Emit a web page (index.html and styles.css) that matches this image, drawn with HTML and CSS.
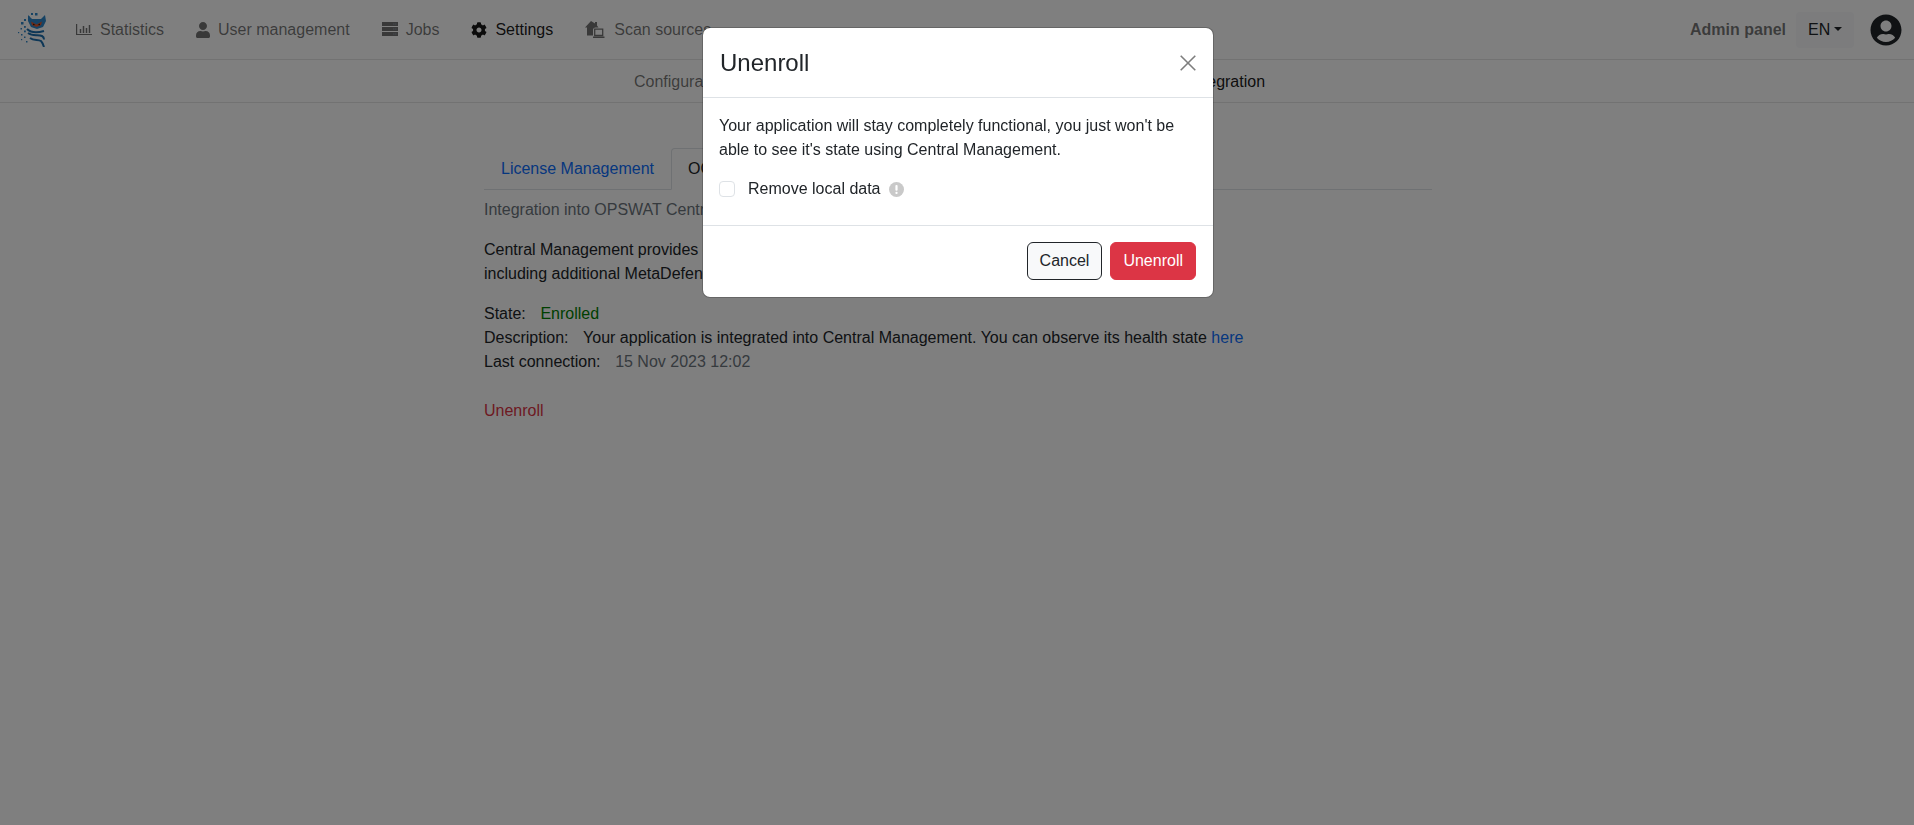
FILE: index.html
```html
<!DOCTYPE html>
<html lang="en">
<head>
<meta charset="utf-8">
<title>Settings</title>
<link rel="stylesheet" href="styles.css">
</head>
<body>
<header class="navbar">
  <a class="brand" href="#" aria-label="Logo">
    <svg width="28" height="34" viewBox="0 0 28 34">
      <g fill="#2f86c8">
        <rect x="13" y="0" width="2" height="2"/><rect x="17" y="0" width="2.500" height="2.500"/><rect x="10" y="3" width="1.500" height="1.500"/>
        <rect x="3" y="9" width="2.500" height="2.500"/><rect x="6" y="6" width="2" height="2"/><rect x="6" y="13" width="1.800" height="1.800"/><rect x="2.500" y="15" width="1.500" height="1.500"/>
        <rect x="6" y="17.500" width="1.800" height="1.800"/><rect x="0" y="19" width="1.200" height="1.200"/><rect x="3" y="21" width="1.500" height="1.500"/><rect x="6" y="23.500" width="1.500" height="1.500"/><rect x="3" y="26" width="1.200" height="1.200"/><rect x="8" y="28" width="1.500" height="1.500"/>
        <path d="M10 2l4 4h9l4-4 1 6-3 6-6 2-6-2-3-6z"/>
      </g>
      <path d="M13 8.500l5.500 3 5.500-3-1 3.500-4.500 2-4.500-2z" fill="#e2572b"/>
      <path d="M15 10.500l2.500 1.500-2.500.3zM22 10.500l-2.500 1.500 2.500.3z" fill="#3a2010"/>
      <g fill="none" stroke="#1d6fae" stroke-width="2">
        <path d="M9 16c4 4 10 4 17 2"/>
        <path d="M10 20c5 4 10 1 14 3 1.500.8 2 2 2 3.500"/>
        <path d="M12 25c4 3 8 1 11 3 1 1 2 3 3 6"/>
      </g>
    </svg>
  </a>
  <nav class="nav-main">
    <a class="nav-link" href="#">
      <svg class="ico" width="16" height="16" viewBox="0 0 16 16"><path d="M.6 2v10.500h15.400" fill="none" stroke="currentColor" stroke-width="1.200"/><path d="M4.500 11V7M7.500 11V4M10.500 11V6M13.500 11V3" stroke="currentColor" stroke-width="1.500"/></svg>
      Statistics
    </a>
    <a class="nav-link" href="#">
      <svg class="ico" width="14" height="16" viewBox="0 0 448 512"><path fill="currentColor" d="M224 256c70.700 0 128-57.300 128-128S294.700 0 224 0 96 57.300 96 128s57.300 128 128 128zm89.600 32h-16.700c-22.200 10.200-46.900 16-72.900 16s-50.600-5.800-72.900-16h-16.700C60.200 288 0 348.200 0 422.400V464c0 26.500 21.500 48 48 48h352c26.500 0 48-21.500 48-48v-41.600c0-74.200-60.200-134.400-134.400-134.400z"/></svg>
      User management
    </a>
    <a class="nav-link" href="#">
      <svg class="ico" width="16" height="16" viewBox="0 0 16 16"><path fill="currentColor" d="M0 0h16v4H0zM0 5h16v4H0zM0 10h16v4H0z"/><path fill="#8a94a0" d="M11 1.500h1.500v1H11zM13 1.500h1.500v1H13zM11 6.500h1.500v1H11zM13 6.500h1.500v1H13zM11 11.500h1.500v1H11zM13 11.500h1.500v1H13z"/></svg>
      Jobs
    </a>
    <a class="nav-link is-active" href="#">
      <svg class="ico" width="16" height="16" viewBox="0 0 512 512"><path fill="currentColor" d="M487.400 315.700l-42.600-24.600c4.300-23.200 4.300-47 0-70.200l42.600-24.600c4.900-2.800 7.100-8.600 5.500-14-11.100-35.600-30-67.800-54.700-94.600-3.800-4.100-10-5.100-14.800-2.300L380.800 110c-17.900-15.400-38.500-27.300-60.800-35.100V25.800c0-5.600-3.900-10.500-9.400-11.700-36.700-8.200-74.300-7.800-109.200 0-5.500 1.200-9.400 6.100-9.400 11.700V75c-22.200 7.900-42.800 19.800-60.800 35.100L88.700 85.500c-4.900-2.800-11-1.900-14.800 2.300-24.700 26.700-43.600 58.900-54.700 94.600-1.700 5.400.6 11.200 5.500 14L67.300 221c-4.300 23.200-4.300 47 0 70.200l-42.600 24.600c-4.900 2.800-7.100 8.600-5.500 14 11.100 35.600 30 67.800 54.700 94.600 3.800 4.100 10 5.100 14.800 2.300l42.600-24.600c17.900 15.400 38.500 27.300 60.800 35.100v49.200c0 5.600 3.900 10.500 9.400 11.700 36.700 8.200 74.300 7.800 109.200 0 5.500-1.200 9.400-6.100 9.400-11.700v-49.200c22.200-7.900 42.800-19.800 60.800-35.100l42.600 24.600c4.900 2.800 11 1.900 14.800-2.300 24.700-26.700 43.600-58.900 54.700-94.600 1.500-5.500-.7-11.300-5.600-14.100zM256 336c-44.100 0-80-35.900-80-80s35.900-80 80-80 80 35.900 80 80-35.900 80-80 80z"/></svg>
      Settings
    </a>
    <a class="nav-link" href="#">
      <svg class="ico" width="21" height="18" viewBox="0 0 21 18"><path fill="currentColor" d="M6 0L0 6.500h2v8h6V9c0-1.500 1-2.500 2.500-2.500h3L12 4.500V1h-2v1.500z"/><path fill="none" stroke="currentColor" stroke-width="1.300" d="M9.700 8.200h8v6.300h-8z"/><path fill="currentColor" d="M8 15.500h11.500V17H8z"/></svg>
      Scan sources
    </a>
  </nav>
  <div class="nav-right">
    <a class="admin" href="#">Admin panel</a>
    <button class="lang" type="button">EN<span class="caret"></span></button>
    <svg class="avatar" width="32" height="32" viewBox="0 0 496 512"><path fill="#212529" d="M248 8C111 8 0 119 0 256s111 248 248 248 248-111 248-248S385 8 248 8zm0 96c48.600 0 88 39.400 88 88s-39.400 88-88 88-88-39.400-88-88 39.400-88 88-88zm0 344c-58.700 0-111.300-26.600-146.500-68.200 18.800-35.400 55.600-59.800 98.500-59.800 2.400 0 4.800.4 7.100 1.100 13 4.200 26.600 6.900 40.900 6.900 14.300 0 28-2.700 40.900-6.900 2.300-.7 4.700-1.100 7.100-1.100 42.900 0 79.700 24.400 98.500 59.800C359.300 421.400 306.700 448 248 448z"/></svg>
  </div>
</header>

<nav class="subnav">
  <a href="#">Configuration</a>
  <a href="#">Security</a>
  <a href="#">Licensing</a>
  <a href="#">Logging</a>
  <a class="is-active" href="#">Integration</a>
</nav>

<main class="content">
  <ul class="tabs">
    <li><a class="tab" href="#">License Management</a></li>
    <li><a class="tab is-active" href="#">OCM Integration</a></li>
  </ul>
  <p class="muted">Integration into OPSWAT Central Management</p>
  <p class="intro">Central Management provides centralized administration of all of your products,<br>including additional MetaDefender services.</p>
  <dl class="facts">
    <div><dt>State:</dt><dd class="ok">Enrolled</dd></div>
    <div><dt>Description:</dt><dd>Your application is integrated into Central Management. You can observe its health state <a href="#">here</a></dd></div>
    <div><dt>Last connection:</dt><dd class="date">15 Nov 2023 12:02</dd></div>
  </dl>
  <a class="danger-link" href="#">Unenroll</a>
</main>

<div class="backdrop"></div>
<div class="modal-wrap">
  <section class="modal" role="dialog" aria-modal="true">
    <div class="modal-head">
      <h5>Unenroll</h5>
      <svg class="close" width="16" height="16" viewBox="0 0 16 16"><path d="M.7.7l14.600 14.600M15.300.7L.7 15.300" stroke="#000" stroke-width="1.600" fill="none"/></svg>
    </div>
    <div class="modal-body">
      <p>Your application will stay completely functional, you just won't be able to see it's state using Central Management.</p>
      <label class="check">
        <span class="box"></span>
        <span>Remove local data</span>
        <svg class="info" width="15" height="15" viewBox="0 0 15 15"><circle cx="7.500" cy="7.500" r="7.500" fill="#c9c9c9"/><rect x="6.400" y="3" width="2.200" height="5.800" rx="1" fill="#fff"/><rect x="6.400" y="9.800" width="2.200" height="2.200" rx="1" fill="#fff"/></svg>
      </label>
    </div>
    <div class="modal-foot">
      <button class="btn btn-light" type="button">Cancel</button>
      <button class="btn btn-danger" type="button">Unenroll</button>
    </div>
  </section>
</div>
</body>
</html>
```

FILE: styles.css
```css
* { box-sizing: border-box; }
html, body { height: 100%; }
body {
  margin: 0;
  background: #fff;
  color: #212529;
  font: 16px/24px "Liberation Sans", Arial, sans-serif;
  overflow: hidden;
}
a { text-decoration: none; color: #0d6efd; }

.navbar {
  display: flex;
  align-items: center;
  height: 60px;
  padding: 0 12px 0 18px;
  border-bottom: 1px solid rgba(0, 0, 0, .1);
}
.brand { display: flex; width: 28px; height: 34px; margin-right: 30px; }
.nav-main { display: flex; gap: 32px; }
.nav-link {
  display: flex;
  align-items: center;
  gap: 8px;
  color: rgba(0, 0, 0, .55);
}
.nav-link.is-active { color: rgba(0, 0, 0, .9); }
.ico { flex: none; }
.nav-right { display: flex; align-items: center; margin-left: auto; }
.admin { font-weight: 700; color: rgba(0, 0, 0, .55); margin-right: 10px; }
.lang {
  display: flex;
  align-items: center;
  width: 58px;
  height: 36px;
  padding: 0 12px;
  border: 0;
  border-radius: 4px;
  background: #f8f9fa;
  color: #212529;
  font: inherit;
}
.caret {
  margin-left: 4px;
  margin-top: -2px;
  border-top: 4.800px solid currentColor;
  border-left: 4.800px solid transparent;
  border-right: 4.800px solid transparent;
}
.avatar { margin-left: 16px; }

.subnav {
  display: flex;
  justify-content: center;
  align-items: center;
  gap: 69.500px;
  height: 43px;
  padding: 2px 15px 0 0;
  border-bottom: 1px solid rgba(0, 0, 0, .1);
}
.subnav a { color: rgba(0, 0, 0, .55); }
.subnav a.is-active { color: rgba(0, 0, 0, .9); }

.content { width: 948px; margin: 45px 0 0 484px; }
.tabs {
  display: flex;
  margin: 0 0 8px;
  padding: 0;
  list-style: none;
  border-bottom: 1px solid #dee2e6;
}
.tab {
  display: block;
  height: 42px;
  margin-bottom: -1px;
  padding: 8px 16px;
  border: 1px solid transparent;
  border-radius: 4px 4px 0 0;
}
.tab.is-active {
  color: #212529;
  background: #fff;
  border-color: #dee2e6 #dee2e6 #fff;
}
.muted { margin: 0 0 16px; color: #6c757d; }
.intro { margin: 0 0 16px; }
.facts { margin: 0 0 25px; }
.facts div { display: flex; }
.facts dt { font-weight: 400; margin-right: 14.600px; }
.facts dd { margin: 0; }
.ok { color: #008000; }
.date { color: #6c757d; }
.danger-link { color: #dc3545; }

.backdrop {
  position: fixed;
  inset: 0;
  background: rgba(0, 0, 0, .5);
}
.modal-wrap {
  position: fixed;
  inset: 0;
  display: flex;
  justify-content: center;
  align-items: flex-start;
  padding: 27px 0 0 2px;
}
.modal {
  width: 512px;
  background: #fff;
  border: 1px solid rgba(0, 0, 0, .2);
  border-radius: 8px;
  background-clip: padding-box;
}
.modal-head {
  display: flex;
  justify-content: space-between;
  align-items: center;
  height: 70px;
  padding: 0 17px;
  border-bottom: 1px solid #dee2e6;
}
.modal-head h5 { margin: 0; font-size: 24px; font-weight: 400; line-height: 36px; }
.close { opacity: .5; }
.modal-body { padding: 16px 16px 24px; }
.modal-body p { margin: 0 0 15px; }
.check { display: flex; align-items: center; }
.box {
  width: 16px;
  height: 16px;
  margin-right: 13px;
  border: 1px solid #dee2e6;
  border-radius: 4px;
}
.info { margin-left: 8px; }
.modal-foot {
  display: flex;
  justify-content: flex-end;
  gap: 8px;
  padding: 16px 17px 17px 16px;
  border-top: 1px solid #dee2e6;
}
.btn {
  height: 38px;
  padding: 0 12px;
  border: 1px solid transparent;
  border-radius: 6px;
  font: inherit;
}
.btn-light { background: #f8f9fa; border-color: #212529; color: #212529; }
.btn-danger { background: #dc3545; border-color: #dc3545; color: #fff; }
```
